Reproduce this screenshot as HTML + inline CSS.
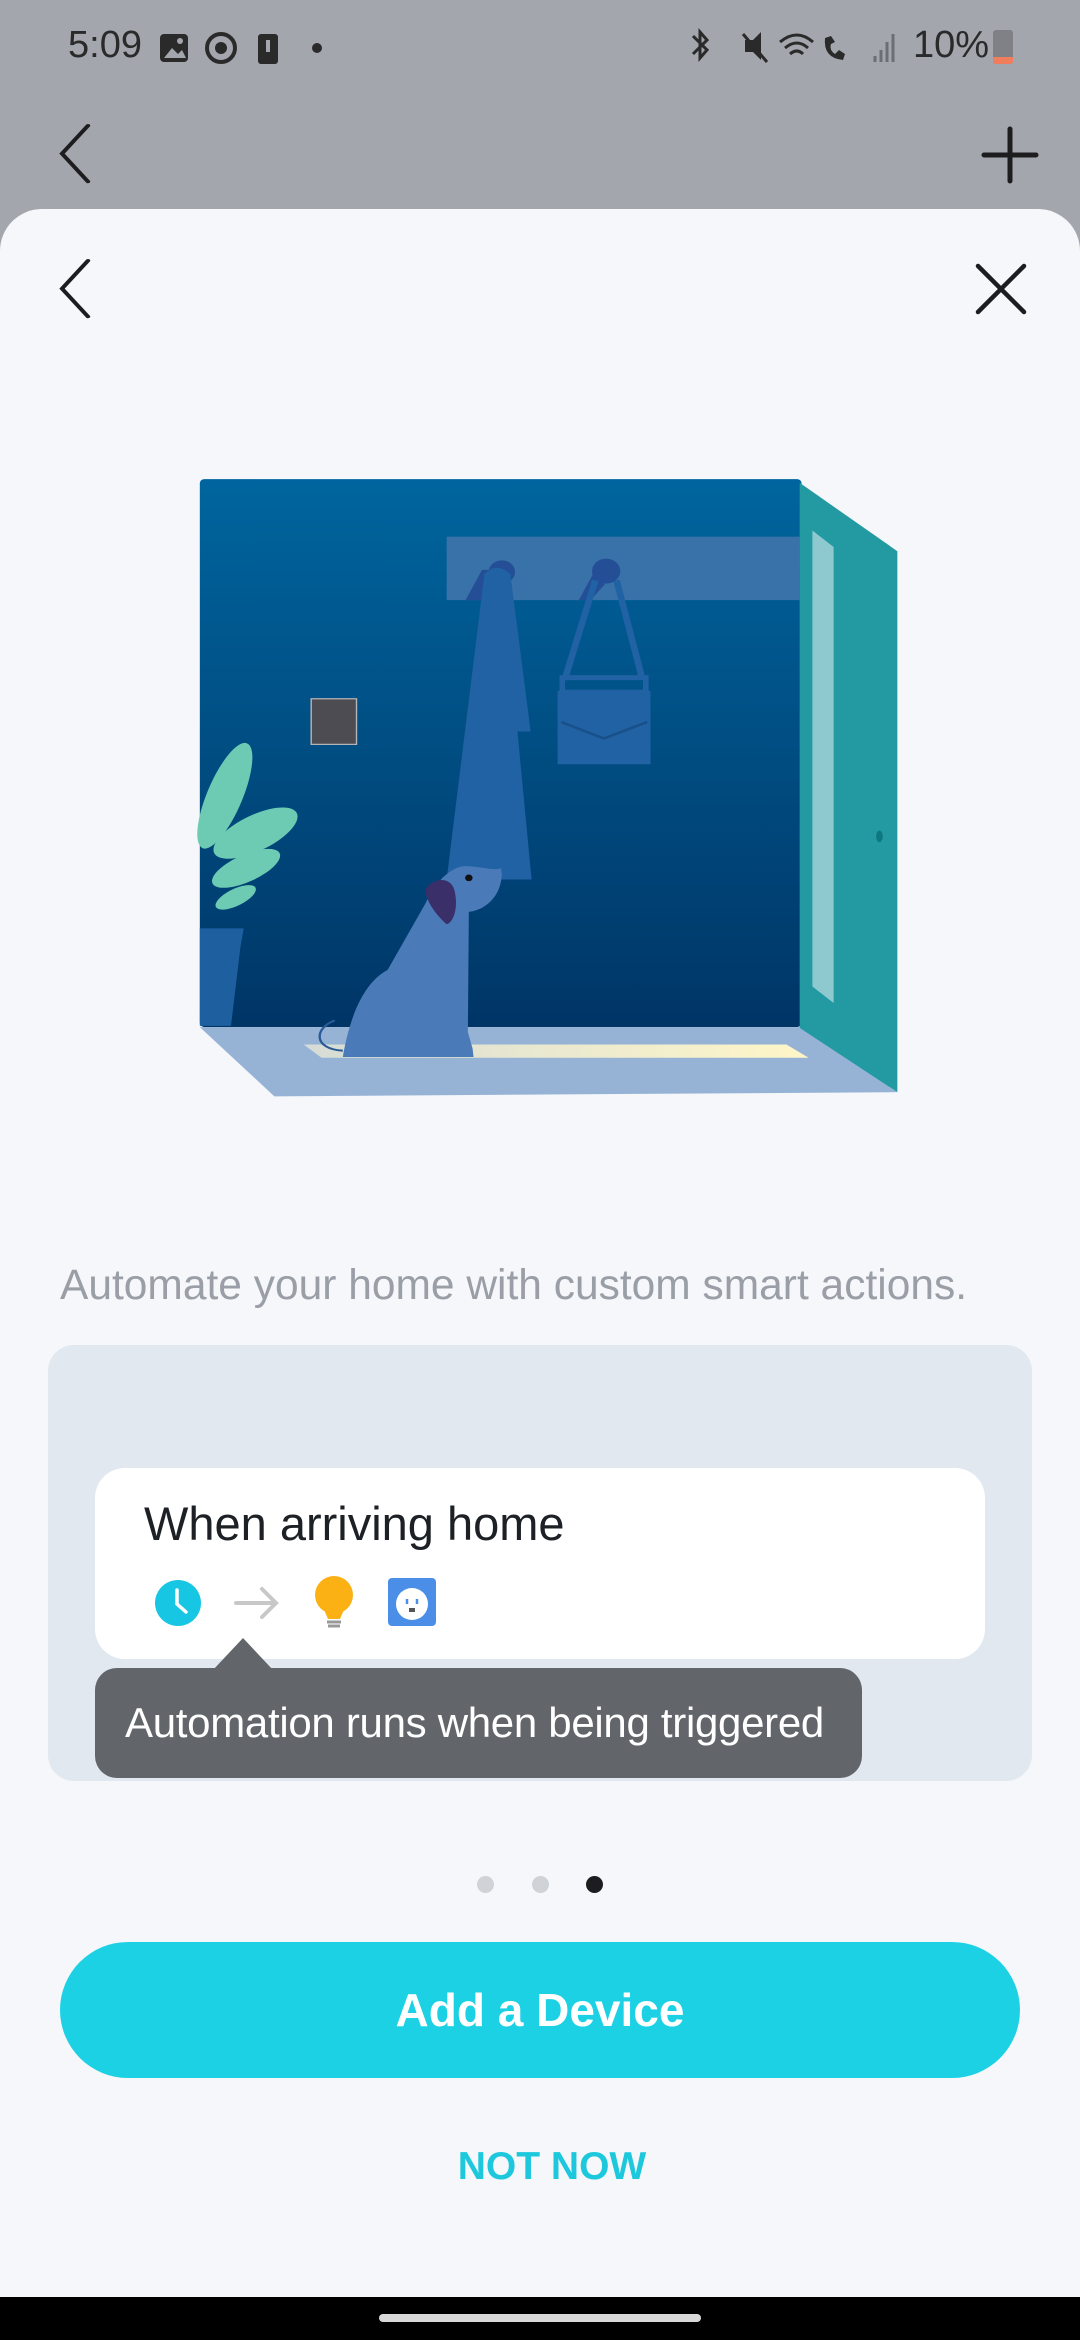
<!DOCTYPE html>
<html><head><meta charset="utf-8"><style>
*{margin:0;padding:0;box-sizing:border-box}
body{width:1080px;height:2340px;background:#a3a6ad;position:relative;overflow:hidden;font-family:"Liberation Sans",sans-serif}
.abs{position:absolute}
.sheet{left:0;top:209px;width:1080px;height:2131px;background:#f5f7fa;border-radius:42px 42px 0 0}
.txt{white-space:nowrap}
</style></head><body>
<div class="abs txt" style="left:68px;top:24px;font-size:38px;color:#2a2a2a">5:09</div>
<svg class="abs" style="left:158px;top:30px" width="180" height="40" viewBox="0 0 180 40">
<rect x="2" y="4" width="28" height="28" rx="4" fill="#2a2a2a"/><path d="M6 28 L14 18 L20 24 L24 20 L28 28Z" fill="#a3a6ad"/><circle cx="22" cy="11" r="3" fill="#a3a6ad"/>
<circle cx="63" cy="18" r="14" fill="none" stroke="#2a2a2a" stroke-width="4"/><circle cx="63" cy="18" r="6" fill="#2a2a2a"/>
<rect x="100" y="4" width="20" height="30" rx="3" fill="#2a2a2a"/><rect x="108" y="10" width="4" height="12" fill="#a3a6ad"/>
<circle cx="159" cy="18" r="5" fill="#2a2a2a"/></svg>
<svg class="abs" style="left:685px;top:28px" width="220" height="40" viewBox="0 0 220 40">
<path d="M8 8 L22 22 L15 30 L15 4 L22 12 L8 26" fill="none" stroke="#2a2a2a" stroke-width="3"/>
<path d="M60 12 L68 12 L76 4 L76 32 L68 24 L60 24Z" fill="#2a2a2a"/><path d="M58 6 L82 34" stroke="#2a2a2a" stroke-width="3"/>
<path d="M95 14 Q112 0 128 14 M100 20 Q112 10 123 20 M105 26 Q112 20 118 26" fill="none" stroke="#2a2a2a" stroke-width="3"/>
<path d="M140 10 Q138 30 158 32 L160 26 L154 22 L150 26 Q144 22 146 16 L150 14 L146 8Z" fill="#2a2a2a"/>
<path d="M190 34 V28 M196 34 V22 M202 34 V14 M208 34 V6" stroke="#6b6e74" stroke-width="3"/></svg>
<div class="abs txt" style="left:913px;top:24px;font-size:38px;color:#2a2a2a">10%</div>
<div class="abs" style="left:993px;top:30px;width:20px;height:34px;background:#7f8187;border-radius:3px;overflow:hidden"><div style="position:absolute;bottom:0;width:100%;height:7px;background:#f07e5c"></div></div>
<svg class="abs" style="left:50px;top:120px" width="50" height="70"><path d="M38 8 L12 48 L38 88" transform="scale(1,0.7)" fill="none" stroke="#1d1d1f" stroke-width="4.5" stroke-linecap="round"/></svg>
<svg class="abs" style="left:980px;top:125px" width="60" height="60"><path d="M30 4 V56 M4 30 H56" stroke="#1d1d1f" stroke-width="5" stroke-linecap="round"/></svg>
<div class="abs sheet"></div>
<svg class="abs" style="left:50px;top:255px" width="50" height="70"><path d="M38 8 L12 48 L38 88" transform="scale(1,0.7)" fill="none" stroke="#1d1d1f" stroke-width="4.5" stroke-linecap="round"/></svg>
<svg class="abs" style="left:972px;top:260px" width="60" height="60"><path d="M6 6 L52 52 M52 6 L6 52" stroke="#1d1d1f" stroke-width="4.5" stroke-linecap="round"/></svg>

<svg class="abs" style="left:180px;top:460px" width="740" height="650" viewBox="0 0 1568 1568" preserveAspectRatio="none">
<defs><linearGradient id="w" x1="0" y1="0" x2="0" y2="1"><stop offset="0" stop-color="#00659e"/><stop offset="1" stop-color="#003566"/></linearGradient>
<linearGradient id="l" x1="0" y1="0" x2="1" y2="0"><stop offset="0" stop-color="#d6dcd6"/><stop offset="1" stop-color="#fff6c8"/></linearGradient></defs>
<rect x="42" y="46" width="1275" height="1322" rx="10" fill="url(#w)"/>
<rect x="565" y="185" width="748" height="153" fill="#3872a8"/>
<path d="M605 338 L640 265 L670 265 L650 338Z M845 338 L880 265 L900 300 L870 338Z" fill="#244e96"/>
<circle cx="682" cy="270" r="28" fill="#244e96"/>
<path d="M645 275 Q670 245 700 275 L743 655 L715 655 L745 1012 L565 1012Z" fill="#2062a3"/>
<path d="M880 290 L815 530 M925 290 L980 530" stroke="#2062a3" stroke-width="14"/>
<circle cx="903" cy="268" r="30" fill="#244e96"/>
<rect x="810" y="525" width="177" height="35" fill="none" stroke="#2062a3" stroke-width="12"/>
<rect x="800" y="557" width="197" height="177" fill="#2062a3"/>
<path d="M808 632 L898 672 L990 632" fill="none" stroke="#19508a" stroke-width="6"/>
<rect x="278" y="576" width="96" height="110" fill="#4d4c52" stroke="#b5b5b5" stroke-width="3"/>
<g fill="#6ccbb2">
<ellipse cx="95" cy="810" rx="38" ry="135" transform="rotate(20 95 810)"/>
<ellipse cx="160" cy="900" rx="100" ry="42" transform="rotate(-30 160 900)"/>
<ellipse cx="140" cy="985" rx="80" ry="32" transform="rotate(-28 140 985)"/>
<ellipse cx="118" cy="1055" rx="48" ry="20" transform="rotate(-30 118 1055)"/></g>
<path d="M42 1130 L135 1130 L128 1175 L108 1365 L42 1365Z" fill="#1e5f9f"/>
<path d="M42 1368 L1313 1368 L1520 1525 L200 1535Z" fill="#96b3d6"/>
<path d="M262 1410 L1285 1410 L1332 1442 L300 1442Z" fill="url(#l)"/>
<path d="M1313 55 L1520 220 L1520 1525 L1313 1370Z" fill="#2399a2"/>
<path d="M1340 170 L1385 210 L1385 1310 L1340 1270Z" fill="#8fc9d0"/>
<ellipse cx="1482" cy="908" rx="7" ry="14" fill="#0e7780"/>
<path d="M345 1425 C280 1420 285 1370 328 1352" fill="none" stroke="#2b5a96" stroke-width="5"/>
<path d="M345 1440 C360 1340 390 1260 440 1230 L520 1070 C540 1020 570 985 600 980 C630 978 660 992 680 985 L682 1000 C680 1050 650 1085 612 1090 L610 1380 L620 1420 L622 1440Z" fill="#4a7bb8"/>
<path d="M520 1035 C540 1005 575 1005 582 1040 C590 1080 580 1115 565 1120 C545 1100 520 1065 520 1035Z" fill="#3b2f6a"/>
<circle cx="612" cy="1008" r="8" fill="#111"/>
</svg>

<div class="abs txt" style="left:60px;top:1262px;font-size:42.5px;color:#9a9ea6">Automate your home with custom smart actions.</div>
<div class="abs" style="left:48px;top:1345px;width:984px;height:436px;background:#e2e8f0;border-radius:26px"></div>
<div class="abs" style="left:95px;top:1468px;width:890px;height:191px;background:#fff;border-radius:30px"></div>
<div class="abs txt" style="left:144px;top:1496px;font-size:47px;color:#1d2125">When arriving home</div>
<svg class="abs" style="left:150px;top:1575px" width="300" height="56">
<circle cx="28" cy="28" r="23" fill="#17c6e2"/><path d="M27 15 V29 L36 37" fill="none" stroke="#fff" stroke-width="3.5" stroke-linecap="round"/>
<path d="M86 28 H126 M112 14 L126 28 L112 42" fill="none" stroke="#c8c8c8" stroke-width="4" stroke-linecap="round"/>
<circle cx="184" cy="20" r="19" fill="#fbb114"/><path d="M172 30 L178 44 H190 L196 30Z" fill="#fbb114"/>
<path d="M177 47 H191 M178 51 H190" stroke="#999" stroke-width="3"/>
<rect x="238" y="3" width="48" height="48" rx="4" fill="#4a8ee8"/><circle cx="262" cy="29" r="16" fill="#fff"/>
<path d="M257 24 V29 M267 24 V29" stroke="#4a8ee8" stroke-width="2.5"/><rect x="259" y="33" width="6" height="4" fill="#555"/>
</svg>
<div class="abs" style="left:213px;top:1638px;width:0;height:0;border-left:30px solid transparent;border-right:30px solid transparent;border-bottom:32px solid #62666b"></div>
<div class="abs" style="left:95px;top:1668px;width:767px;height:110px;background:#62666b;border-radius:22px"></div>
<div class="abs txt" style="left:125px;top:1699px;font-size:42px;color:#fff;letter-spacing:-0.3px">Automation runs when being triggered</div>
<div class="abs" style="left:477px;top:1876px;width:17px;height:17px;border-radius:50%;background:#cfd2d7"></div>
<div class="abs" style="left:532px;top:1876px;width:17px;height:17px;border-radius:50%;background:#cfd2d7"></div>
<div class="abs" style="left:586px;top:1876px;width:17px;height:17px;border-radius:50%;background:#1d1d1f"></div>
<div class="abs" style="left:60px;top:1942px;width:960px;height:136px;background:#1dd1e5;border-radius:68px;color:#fff;font-size:46px;font-weight:bold;text-align:center;line-height:136px">Add a Device</div>
<div class="abs txt" style="left:0;width:1104px;text-align:center;top:2145px;font-size:39px;font-weight:bold;color:#1dc8dd">NOT NOW</div>
<div class="abs" style="left:0;top:2297px;width:1080px;height:43px;background:#000"></div>
<div class="abs" style="left:379px;top:2314px;width:322px;height:8px;border-radius:4px;background:#d8d8d8"></div>
</body></html>
